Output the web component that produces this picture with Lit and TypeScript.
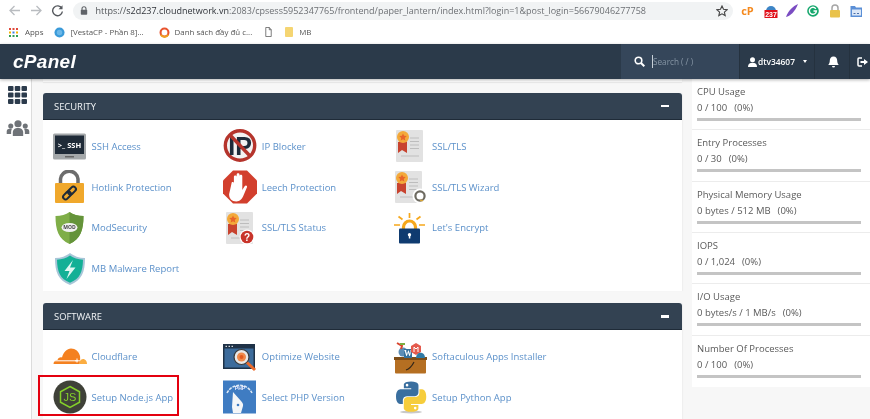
import { LitElement, html, css, svg } from "lit";
import { customElement } from "lit/decorators.js";

const ribbon = svg`
  <path d="M4 13v11l4-3 5 3V13z" fill="#c8432f"/>
  <circle cx="9" cy="8" r="6" fill="#f3a93a"/>
  <path d="M9 4.400l1.100 2.400 2.600.3-1.900 1.800.5 2.600L9 10.200l-2.300 1.300.5-2.600-1.900-1.800 2.600-.3z" fill="#e8642a"/>`;
const docLines = svg`
  <path d="M16 9h9M16 12.500h9M16 16h9M16 19.500h9M7 27h18" stroke="#bdbdbd" stroke-width="1.200" fill="none"/>`;
const doc = svg`<rect x="2" y="1" width="27" height="32" rx="1" fill="#e2e2e2"/>`;

const icons: Record<string, unknown> = {
  ssh: svg`<rect x="0" y="4.500" width="33" height="26" rx="1.500" fill="#a4a8aa"/><rect x="2" y="6.500" width="29" height="18.500" fill="#1f2b38"/><rect x="12" y="27" width="9" height="1.500" fill="#666"/><text x="16.500" y="18.800" font-family="'Open Sans',sans-serif" font-size="7.500" font-weight="700" fill="#fff" text-anchor="middle">&gt;_ SSH</text>`,
  hotlink: svg`<path d="M7.500 14V9a8.800 8.800 0 0 1 17.500 0v5" fill="none" stroke="#6c6c6c" stroke-width="3.500"/><rect x="2" y="13" width="29" height="20" rx="1" fill="#f0a82c"/><g fill="none" stroke="#1d2a38" stroke-width="2" transform="rotate(-45 16.500 23)"><rect x="8.500" y="20.500" width="9" height="5" rx="2.500"/><rect x="15.500" y="20.500" width="9" height="5" rx="2.500"/></g>`,
  mod: svg`<path d="M16.500 1C13 3.500 8 5 2.500 5c0 14 3 23 14 28 11-5 14-14 14-28C25 5 20 3.500 16.500 1z" fill="#7fae48"/><path d="M16.500 1C20 3.500 25 5 30.500 5c0 14-3 23-14 28z" fill="#64933a"/><ellipse cx="16.500" cy="16.500" rx="8" ry="4.500" fill="#f1f1f1"/><text x="16.500" y="18.300" font-family="'Open Sans',sans-serif" font-size="5" font-weight="700" fill="#444" text-anchor="middle">MOD</text>`,
  mb: svg`<path d="M17 2c-4 3-9 5-15 5 0 14 3 22 15 27 12-5 15-13 15-27-6 0-11-2-15-5z" fill="#a8c6d8"/><path d="M17 4.500C13.500 7 9 8.500 4 8.800c.2 12 3 19 13 23 10-4 12.800-11 13-23-5-.3-9.500-1.800-13-4.300z" fill="#13b096"/><path d="M20 9l-8.500 11h5l-3 8 9-11.500h-5.500z" fill="#dff7f2"/>`,
  ip: svg`<circle cx="17" cy="16.500" r="14.700" fill="#f2f2f2" stroke="#b5342c" stroke-width="3.400"/><text x="17" y="25.500" font-family="'Liberation Sans',sans-serif" font-size="25" font-weight="700" fill="#1d2b3a" text-anchor="middle">IP</text><path d="M7 6l20 21" stroke="#b5342c" stroke-width="3.400"/>`,
  leech: svg`<path d="M10 0.500h14l10 10v13l-10 10H10l-10-10v-13z" fill="#d23f2d"/><g transform="translate(-3.500 -1) scale(1.200)"><path d="M10 12c0-1.500 2-1.500 2 0v4V6.500c0-1.500 2.300-1.500 2.300 0V15V4.700c0-1.500 2.400-1.500 2.400 0V15V6c0-1.500 2.300-1.500 2.300 0v11.500l1.800-3c1-1.600 2.800-.6 2 1l-3 7c-1 2.500-2.800 4.500-5.800 4.500-4 0-6-2.500-6-6z" fill="#fff"/></g>`,
  status: svg`<g transform="translate(1 0)">${doc}${docLines}${ribbon}</g><circle cx="24" cy="26" r="7.500" fill="#fff"/><circle cx="24" cy="26" r="6.300" fill="#c8342a"/><text x="24" y="29.500" font-family="'Liberation Sans',sans-serif" font-size="10" font-weight="700" fill="#fff" text-anchor="middle">?</text>`,
  ssl: svg`${doc}${docLines}${ribbon}`,
  wizard: svg`<g transform="translate(-1 0)">${doc}${docLines}${ribbon}</g><circle cx="26" cy="26" r="7.500" fill="#fff"/><circle cx="26" cy="26" r="4.600" fill="none" stroke="#6d6a60" stroke-width="2.200"/><path d="M26 30.500h3" stroke="#d5a438" stroke-width="1.500"/>`,
  le: svg`<path d="M9.500 18v-2a6 6 0 0 1 12 0v2" fill="none" stroke="#f6a81c" stroke-width="3.200"/><rect x="5" y="17.500" width="21" height="15" rx="1" fill="#0f3b70"/><circle cx="15.500" cy="23.700" r="1.700" fill="#fff"/><rect x="14.800" y="24" width="1.500" height="3.500" fill="#fff"/><path d="M15.500 2v5M4.500 5.500l4 3M26.500 5.500l-4 3M0 14h6M25 14h6" stroke="#f6a81c" stroke-width="1.700" fill="none"/>`,
  cloudflare: svg`<path d="M0.500 24c0-2.500 2-4 4-4 .6-2 2.500-3 4.500-2.500C10.500 12 14 8.500 18 8.500c4.500 0 8 3 9 7.500.3 2 .2 5-.3 8z" fill="#f48120"/><path d="M26 24c.5-2 1.500-5 4-5 2.500 0 4 2.500 4 5z" fill="#fbad41"/><path d="M1 20.800h24" stroke="#fff" stroke-width="1"/><path d="M24 18.500v4M22 20.800h5" stroke="#fff" stroke-width="1"/>`,
  optimize: svg`<rect x="0" y="4" width="32" height="25" fill="#1f3247"/><rect x="1.500" y="8.500" width="29" height="19" fill="#3d6c9c"/><path d="M2.500 6.300h1.500M5.500 6.300H7M8.500 6.300H10" stroke="#fff"/><circle cx="18.500" cy="17" r="7.500" fill="#e8e8e8" stroke="#3a3a3a" stroke-width="1.200"/><circle cx="18.500" cy="17" r="4.500" fill="#f08a4b"/><circle cx="18.500" cy="17" r="2" fill="#e25a1f"/><path d="M24 22.500l8 7.500" stroke="#ec6a2a" stroke-width="3"/>`,
  php: svg`<rect x="0" y="0.500" width="33" height="33" fill="#3f7cc2"/><path d="M4 13a14 14 0 0 1 25 0" fill="none" stroke="#dfeaf5" stroke-width="1.500" stroke-dasharray="3 1"/><text x="17" y="9.500" font-family="'Liberation Sans',sans-serif" font-size="5" font-weight="700" fill="#eef" text-anchor="middle">PHP</text><path d="M10 12l8 9c1.500 2 2.500 3 2 5l-2 7h-8l-1-6z" fill="#f4f6f8"/><circle cx="15" cy="25" r="1.300" fill="#3f7cc2"/>`,
  soft: svg`<rect x="1" y="18" width="31" height="15.500" rx="1" fill="#b56f22"/><rect x="0" y="17" width="33" height="3" fill="#7d4d18"/><path d="M12 30c3-1 6-4 8-8" stroke="#33261a" stroke-width="1.200" fill="none"/><circle cx="9" cy="12" r="4.500" fill="#5b8db5"/><path d="M10 18V9h8v9z" fill="#34719c"/><text x="14" y="16" font-family="'Liberation Serif',serif" font-size="8" font-weight="700" fill="#fff" text-anchor="middle">W</text><path d="M3 3l5 3-1 3" stroke="#d8442e" stroke-width="2" fill="none"/><path d="M6 4h5" stroke="#7aae3f" stroke-width="2"/><path d="M17 6l5-3 5 3v6l-5 3-5-3z" fill="#e45a4d"/><path d="M20 12V7l2 2 2-2v5" stroke="#fff" fill="none"/><path d="M22 18c0-4 3-6 6-5 1.500.5 3 2 3 5z" fill="#2f7aa5"/>`,
  node: svg`<circle cx="17" cy="17" r="16.500" fill="#3f4138"/><path d="M17 6.500l9.500 5.300v10.400L17 27.500l-9.500-5.300V11.800z" fill="none" stroke="#84d02a" stroke-width="1.500"/><text x="17" y="21.200" font-family="'Liberation Sans',sans-serif" font-size="11" fill="#84d02a" text-anchor="middle">JS</text>`,
  python: svg`<ellipse cx="17" cy="32" rx="11" ry="1.500" fill="#c9c9c9"/><g transform="translate(2 1.500) scale(.275)"><path fill="#3a6f9f" d="M54.900 0C26.800 0 28.600 12.200 28.600 12.200v12.600h26.800v3.800H17.900S0 26.600 0 54.900s15.600 27.300 15.600 27.300h9.300V69.100s-.5-15.600 15.400-15.600h26.500s14.900.2 14.900-14.400V14.900S84 0 54.900 0zM40.200 8.500a4.800 4.800 0 1 1 0 9.600 4.800 4.800 0 0 1 0-9.600z"/><path transform="rotate(180 55 55)" fill="#f6cd3c" d="M54.900 0C26.800 0 28.600 12.200 28.600 12.200v12.600h26.800v3.800H17.900S0 26.600 0 54.900s15.600 27.300 15.600 27.300h9.300V69.100s-.5-15.600 15.400-15.600h26.500s14.900.2 14.900-14.400V14.900S84 0 54.900 0zM40.200 8.500a4.800 4.800 0 1 1 0 9.600 4.800 4.800 0 0 1 0-9.600z"/></g>`,
};

const security = [
  ["SSH Access", "ssh"], ["IP Blocker", "ip"], ["SSL/TLS", "ssl"],
  ["Hotlink Protection", "hotlink"], ["Leech Protection", "leech"], ["SSL/TLS Wizard", "wizard"],
  ["ModSecurity", "mod"], ["SSL/TLS Status", "status"], ["Let's Encrypt", "le"],
  ["MB Malware Report", "mb"],
];
const software = [
  ["Cloudflare", "cloudflare"], ["Optimize Website", "optimize"], ["Softaculous Apps Installer", "soft"],
  ["Setup Node.js App", "node"], ["Select PHP Version", "php"], ["Setup Python App", "python"],
];
const stats = [
  ["CPU Usage", "0 / 100", "(0%)"],
  ["Entry Processes", "0 / 30", "(0%)"],
  ["Physical Memory Usage", "0 bytes / 512 MB", "(0%)"],
  ["IOPS", "0 / 1,024", "(0%)"],
  ["I/O Usage", "0 bytes/s / 1 MB/s", "(0%)"],
  ["Number Of Processes", "0 / 100", "(0%)"],
];

@customElement("app-root")
export class AppRoot extends LitElement {
  static styles = css`
    :host { display: block; position: relative; width: 870px; height: 419px; overflow: hidden; background: #fff; font-family: "Open Sans", sans-serif; filter: blur(.3px); }
    svg { display: block; flex: none; }
    .toolbar { height: 22px; display: flex; align-items: center; padding: 0 0 1px 8px; box-sizing: border-box; }
    .nav { width: 13px; height: 13px; margin-right: 8.500px; }
    .pill { width: 660px; height: 18px; background: #f1f3f4; border-radius: 9px; display: flex; align-items: center; padding: 0 5px 0 23px; box-sizing: border-box; position: relative; font-size: 9px; color: #6d7074; white-space: nowrap; }
    .pill b { font-weight: 400; color: #30343a; }
    .pill .pad { color: #505458; }
    .lock { position: absolute; left: 7px; top: 4.500px; }
    .star { position: absolute; right: 5px; top: 3px; }
    .exts { display: flex; align-items: center; margin-left: 6px; gap: 5.300px; }
    .exts svg { width: 16px; height: 16px; }
    .cp { font-size: 11px; font-weight: 700; color: #f58a1f; width: 16px; line-height: 16px; text-align: center; margin: 0 2px 0 1px; }
    .marks { height: 22px; display: flex; align-items: center; padding: 0 0 2px 9px; box-sizing: border-box; font-size: 7.900px; color: #555; white-space: nowrap; }
    .mark { display: flex; align-items: center; gap: 5px; }
    .m0 { gap: 7px; }
    .m1 { margin-left: 11px; } .m2 { margin-left: 15px; } .m3 { margin-left: 13px; } .m4 { margin-left: 13px; } .m5 { margin-left: 6px; }
    .head { height: 35px; background: #2b3a4a; color: #fff; display: flex; align-items: stretch; box-shadow: 0 1px 3px rgba(0,0,0,.3); position: relative; }
    .logo { font-family: "Liberation Sans", sans-serif; font-weight: 700; font-style: italic; font-size: 19px; letter-spacing: .3px; margin: 0 auto 0 13px; align-self: center; }
    .search { width: 119px; background: #35465a; display: flex; align-items: center; box-sizing: border-box; padding-left: 13px; font-size: 8.200px; color: #8695a5; border-right: 1px solid #25323f; }
    .caret-l { width: 1px; height: 13px; background: #c8d0d8; margin: 0 0 0 7px; }
    .user { width: 75px; display: flex; align-items: center; box-sizing: border-box; padding-left: 8px; font-size: 8.400px; font-weight: 600; gap: 1px; border-right: 1px solid #25323f; color: #fff; }
    .drop { width: 0; height: 0; border: 2.500px solid transparent; border-top: 3px solid #fff; border-bottom: 0; margin-left: 7.500px; }
    .bell { width: 35px; display: flex; align-items: center; justify-content: center; border-right: 1px solid #25323f; box-sizing: border-box; padding-left: 2px; }
    .out { width: 20px; display: flex; align-items: center; padding-left: 7px; box-sizing: border-box; }
    .main { display: flex; height: 340px; background: #f7f7f7; }
    .side { width: 32px; background: #fff; border-right: 1px solid #dcdcdc; flex: none; display: flex; flex-direction: column; align-items: center; padding: 7px 0 0 4px; box-sizing: border-box; gap: 16px; }
    .content { width: 639px; margin-left: 11px; flex: none; }
    .prev { height: 3px; background: #fff; box-shadow: 0 1px 1px #e8e8e8; margin-bottom: 11px; }
    .panel { margin-bottom: 12.500px; background: #fff; border-radius: 3px 3px 0 0; box-shadow: 1px 0 1px #eee; }
    .title { height: 27px; background: #334252; border-radius: 3px 3px 0 0; display: flex; align-items: center; justify-content: space-between; padding: 0 13px 0 11px; color: #f2f4f6; font-size: 9.400px; border-bottom: 1px solid #1f2b38; box-sizing: border-box; }
    .minus { width: 8px; height: 2.500px; background: #fff; }
    .grid { display: grid; grid-template-columns: repeat(3, 170.300px); grid-auto-rows: 40.700px; padding: 6px 0 2px 10px; }
    .item { display: flex; align-items: center; gap: 4.500px; font-size: 9.500px; color: #5c91ca; white-space: nowrap; }
    .item svg { width: 34px; height: 34px; }
    .stats { width: 178px; margin-left: 10px; height: 308px; background: #fff; flex: none; }
    .stat { height: 51.330px; box-sizing: border-box; padding: 5px 0 0 5px; border-bottom: 1.500px solid #ececec; font-size: 9.500px; color: #5a5a5a; line-height: 16px; white-space: pre; }
    .stat:last-child { border-bottom: 0; }
    .bar { width: 164px; height: 3px; background: #c4c4c4; margin-top: 2px; }
    .pct { margin-left: 7px; }
    .hl { position: absolute; left: 38px; top: 375px; width: 141px; height: 41px; box-sizing: border-box; border: 2px solid #e4000f; }
  `;

  private tile(name: string, icon: string) {
    return html`<div class="item"><svg viewBox="0 0 34 34">${icons[icon]}</svg><span>${name}</span></div>`;
  }

  render() {
    return html`
      <div class="toolbar">
        <svg class="nav" viewBox="0 0 13 13"><path d="M12 6.500H2M6.500 2L2 6.500 6.500 11" fill="none" stroke="#b9bcc0" stroke-width="1.300"/></svg>
        <svg class="nav" viewBox="0 0 13 13"><path d="M1 6.500h10M6.500 2L11 6.500 6.500 11" fill="none" stroke="#b9bcc0" stroke-width="1.300"/></svg>
        <svg class="nav" viewBox="0 0 13 13"><path d="M10.800 4.300A4.900 4.900 0 1 0 11.400 7.500" fill="none" stroke="#55595e" stroke-width="1.400"/><path d="M11.500 1.200v4h-4z" fill="#55595e"/></svg>
        <div class="pill">
          <svg class="lock" width="8" height="9" viewBox="0 0 8 9"><path d="M2 4V2.700a2 2 0 0 1 4 0V4" fill="none" stroke="#5f6368" stroke-width="1.100"/><rect x=".8" y="3.800" width="6.400" height="5" rx=".8" fill="#5f6368"/></svg>
          <span><span class="pad">https://</span><b>s2d237.cloudnetwork.vn</b>:2083/cpsess5952347765/frontend/paper_lantern/index.html?login=1&amp;post_login=56679046277758</span>
          <svg class="star" width="12" height="12" viewBox="0 0 12 12"><path d="M6 1l1.500 3.300 3.600.4-2.700 2.400.8 3.500L6 8.800l-3.200 1.800.8-3.500L.9 4.700l3.600-.4z" fill="none" stroke="#444" stroke-width="1.100"/></svg>
        </div>
        <div class="exts">
          <span class="cp">cP</span>
          <svg viewBox="0 0 16 16"><path d="M3 8a5 5 0 0 1 10 0z" fill="#3d85c6"/><rect x="1.500" y="7" width="13" height="8" fill="#e0101a"/><text x="8" y="14" font-family="'Liberation Sans',sans-serif" font-size="7" font-weight="700" fill="#fff" text-anchor="middle">237</text></svg>
          <svg viewBox="0 0 16 16"><path d="M14 1C9 3 4 8 2 14c4-1 9-5 12-13z" fill="#7a4cc2"/></svg>
          <svg viewBox="0 0 16 16"><circle cx="8" cy="8" r="5.800" fill="#14a76c"/><path d="M10.800 5.800A3.500 3.500 0 1 0 11.400 8H8.500" fill="none" stroke="#fff" stroke-width="1.400"/></svg>
          <svg viewBox="0 0 16 16"><path d="M5 7V5a3 3 0 0 1 6 0v2" fill="none" stroke="#a6a6a6" stroke-width="1.500"/><rect x="3" y="7" width="10" height="7.500" rx="1" fill="#e9c24b"/></svg>
          <svg viewBox="0 0 16 16"><path d="M2.500 3h4.500l1 1.500h6v9.500h-11.500z" fill="#5b8fd6"/><rect x="4" y="6.500" width="9" height="6" fill="#dbe7f7"/><path d="M5.500 10.500h2M9 10.500h2" stroke="#4a6ea8"/></svg>
        </div>
      </div>
      <div class="marks">
        <div class="mark m0"><svg width="9" height="9" viewBox="0 0 9 9"><path d="M0 1h2M3.500 1h2M7 1h2" stroke="#e0483a" stroke-width="2"/><path d="M0 4.500h2M7 4.500h2" stroke="#f4b400" stroke-width="2"/><path d="M3.500 4.500h2" stroke="#3a7fe0" stroke-width="2"/><path d="M0 8h2M3.500 8h2M7 8h2" stroke="#2f9e54" stroke-width="2"/></svg><span>Apps</span></div>
        <div class="mark m1"><svg width="11" height="11" viewBox="0 0 12 12"><circle cx="6" cy="6" r="5.500" fill="#3a9ad9"/><circle cx="6" cy="6" r="3" fill="#6cb8e8"/></svg><span>[VestaCP - Phần 8]...</span></div>
        <div class="mark m2"><svg width="11" height="11" viewBox="0 0 12 12"><circle cx="6" cy="6" r="4.300" fill="none" stroke="#e8542f" stroke-width="2.300"/><path d="M2 8.500A4.500 4.500 0 0 0 10 8.500" fill="none" stroke="#f0a020" stroke-width="2"/></svg><span>Danh sách đầy đủ c...</span></div>
        <div class="mark m3"><svg width="7" height="10" viewBox="0 0 9 11" preserveAspectRatio="none"><path d="M1 .5h4.500L8 3v7.500H1zM5.500.5V3H8" fill="#fff" stroke="#555" stroke-width=".9"/></svg></div>
        <div class="mark m4"><svg width="8" height="10" viewBox="0 0 9 11" preserveAspectRatio="none"><rect width="9" height="11" rx="1" fill="#f5d572"/></svg></div>
        <div class="mark m5"><span>MB</span></div>
      </div>
      <div class="head">
        <span class="logo">cPanel</span>
        <div class="search">
          <svg width="11" height="11" viewBox="0 0 11 11"><circle cx="4.500" cy="4.500" r="3.300" fill="none" stroke="#fff" stroke-width="1.600"/><path d="M7 7l3.300 3.300" stroke="#fff" stroke-width="2"/></svg>
          <span class="caret-l"></span><span>Search ( / )</span>
        </div>
        <div class="user">
          <svg width="9" height="10" viewBox="0 0 9 10"><circle cx="4.500" cy="2.800" r="2.500" fill="#fff"/><path d="M0 10c0-3 1.500-4.200 4.500-4.200S9 7 9 10z" fill="#fff"/></svg>
          <span>dtv34607</span><span class="drop"></span>
        </div>
        <div class="bell"><svg width="11" height="12" viewBox="0 0 11 12"><path d="M5.500 .5c-2.500 0-3.700 1.800-3.700 4 0 2.500-.8 3.500-1.600 4.500h10.600c-.8-1-1.600-2-1.600-4.500 0-2.200-1.200-4-3.700-4z" fill="#fff"/><path d="M4 10h3a1.500 1.500 0 0 1-3 0z" fill="#fff"/></svg></div>
        <div class="out"><svg width="11" height="10" viewBox="0 0 11 10"><path d="M5 1H2a1 1 0 0 0-1 1v6a1 1 0 0 0 1 1h3" fill="none" stroke="#fff" stroke-width="1.500"/><path d="M3.500 4h3.500V2l4 3-4 3V6H3.500z" fill="#fff"/></svg></div>
      </div>
      <div class="main">
        <div class="side">
          <svg width="19" height="18" viewBox="0 0 19 18" fill="#2c3b4c"><rect width="5.500" height="5" rx="1"/><rect x="6.750" width="5.500" height="5" rx="1"/><rect x="13.500" width="5.500" height="5" rx="1"/><rect y="6.500" width="5.500" height="5" rx="1"/><rect x="6.750" y="6.500" width="5.500" height="5" rx="1"/><rect x="13.500" y="6.500" width="5.500" height="5" rx="1"/><rect y="13" width="5.500" height="5" rx="1"/><rect x="6.750" y="13" width="5.500" height="5" rx="1"/><rect x="13.500" y="13" width="5.500" height="5" rx="1"/></svg>
          <svg width="24" height="16" viewBox="0 0 24 17" fill="#6f7378"><circle cx="12" cy="4" r="3.800"/><circle cx="4.300" cy="6.500" r="2.700"/><circle cx="19.700" cy="6.500" r="2.700"/><path d="M6.500 17v-4c0-3 2.500-4.500 5.500-4.500s5.500 1.500 5.500 4.500v4z"/><path d="M0 15v-3c0-2 1.500-2.800 3.500-2.800 1 0 1.500.2 2 .6-.6.800-.8 1.800-.8 3V15zM24 15v-3c0-2-1.500-2.800-3.500-2.800-1 0-1.500.2-2 .6.600.8.800 1.800.8 3V15z"/></svg>
        </div>
        <div class="content">
          <div class="prev"></div>
          <section class="panel">
            <div class="title"><span>SECURITY</span><span class="minus"></span></div>
            <div class="grid">${security.map(([n, i]) => this.tile(n, i))}</div>
          </section>
          <section class="panel">
            <div class="title"><span>SOFTWARE</span><span class="minus"></span></div>
            <div class="grid">${software.map(([n, i]) => this.tile(n, i))}</div>
          </section>
        </div>
        <div class="stats">
          ${stats.map(([t, v, p]) => html`<div class="stat"><div>${t}</div><div>${v}<span class="pct">${p}</span></div><div class="bar"></div></div>`)}
        </div>
      </div>
      <div class="hl"></div>
    `;
  }
}
